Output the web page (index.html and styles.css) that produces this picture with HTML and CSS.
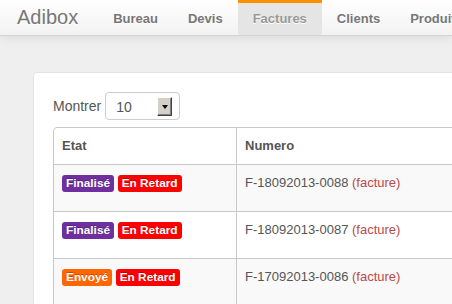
FILE: index.html
```html
<!DOCTYPE html>
<html lang="fr">
<head>
<meta charset="utf-8">
<title>Adibox - Factures</title>
<link rel="stylesheet" href="styles.css">
</head>
<body>
<header class="navbar">
  <a class="brand" href="#">Adibox</a>
  <nav class="nav">
    <a class="nav-link" href="#">Bureau</a>
    <a class="nav-link" href="#">Devis</a>
    <a class="nav-link active" href="#">Factures</a>
    <a class="nav-link" href="#">Clients</a>
    <a class="nav-link" href="#">Produits</a>
  </nav>
</header>
<main class="page">
  <section class="card">
    <div class="length">
      <span class="length-label">Montrer</span>
      <span class="select"><span class="select-value">10</span><span class="select-btn"><span class="arrow"></span></span></span>
    </div>
    <table class="grid">
      <thead>
        <tr><th class="col-etat">Etat</th><th>Numero</th></tr>
      </thead>
      <tbody>
        <tr class="odd">
          <td><span class="label purple">Finalisé</span> <span class="label red">En Retard</span></td>
          <td>F-18092013-0088 <a class="doc" href="#">(facture)</a></td>
        </tr>
        <tr>
          <td><span class="label purple">Finalisé</span> <span class="label red">En Retard</span></td>
          <td>F-18092013-0087 <a class="doc" href="#">(facture)</a></td>
        </tr>
        <tr class="odd">
          <td><span class="label orange">Envoyé</span> <span class="label red">En Retard</span></td>
          <td>F-17092013-0086 <a class="doc" href="#">(facture)</a></td>
        </tr>
      </tbody>
    </table>
  </section>
</main>
</body>
</html>
```
FILE: styles.css
```css
html, body {
  margin: 0;
  padding: 0;
}
body {
  background: #efefef;
  font-family: "Liberation Sans", Arial, sans-serif;
  font-size: 13px;
  color: #555;
  overflow: hidden;
  width: 452px;
  height: 304px;
}
.navbar {
  display: flex;
  align-items: flex-start;
  height: 35px;
  background: linear-gradient(to bottom, #ffffff, #f2f2f2);
  border-bottom: 1px solid #d4d4d4;
  box-shadow: 0 1px 10px rgba(0, 0, 0, 0.1);
  white-space: nowrap;
  position: relative;
}
.brand {
  display: block;
  padding: 7px 20px 0 17px;
  font-size: 20px;
  line-height: 20px;
  color: #777;
  text-decoration: none;
  text-shadow: 0 1px 0 #fff;
}
.nav {
  display: flex;
}
.nav-link {
  display: block;
  border-top: 3px solid transparent;
  padding: 6px 15px 6px;
  line-height: 20px;
  font-size: 13px;
  font-weight: bold;
  color: #777;
  text-decoration: none;
  text-shadow: 0 1px 0 #fff;
}
.nav-link.active {
  border-top-color: #ff9000;
  background: #e5e5e5;
  color: #999;
}
.page {
  padding: 36px 0 0 33px;
}
.card {
  background: #fff;
  border: 1px solid #e2e2e2;
  border-radius: 4px;
  padding: 19px 0 0 19px;
  width: 600px;
  height: 400px;
}
.length {
  display: flex;
  align-items: center;
  gap: 4px;
  height: 28px;
}
.length-label {
  font-size: 14px;
  color: #555;
}
.select {
  display: flex;
  align-items: center;
  justify-content: space-between;
  box-sizing: border-box;
  width: 75px;
  height: 28px;
  border: 1px solid #ccc;
  border-radius: 4px;
  padding: 0 7px 0 10px;
  background: #fff;
}
.select-value {
  font-size: 14px;
  color: #555;
  padding-top: 2px;
}
.select-btn {
  box-sizing: border-box;
  width: 15px;
  height: 19px;
  background: #d4d0c8;
  border: 1px solid;
  border-color: #fff #404040 #404040 #fff;
  box-shadow: inset -1px -1px 0 #808080;
  display: flex;
  align-items: center;
  justify-content: center;
}
.arrow {
  width: 0;
  height: 0;
  border-left: 3.5px solid transparent;
  border-right: 3.5px solid transparent;
  border-top: 4px solid #000;
  margin-top: 1px;
}
.grid {
  margin-top: 7px;
  width: 560px;
  border-collapse: separate;
  border-spacing: 0;
  border: 1px solid #c8c8c8;
  border-left-width: 1px;
  border-radius: 4px 0 0 0;
}
.grid th,
.grid td {
  text-align: left;
  vertical-align: top;
  padding: 8px 9px 8px 8px;
  line-height: 20px;
}
.grid th {
  font-weight: bold;
  color: #555;
  border-bottom: 1px solid #c8c8c8;
}
.grid td {
  padding-bottom: 18px;
  border-bottom: 1px solid #c8c8c8;
}
.grid th + th,
.grid td + td {
  border-left: 1px solid #c8c8c8;
}
.col-etat {
  width: 165px;
}
.grid tr.odd td {
  background: #f9f9f9;
}
.label {
  display: inline-block;
  padding: 1px 4px 2px;
  font-size: 11.844px;
  font-weight: bold;
  line-height: 14px;
  color: #fff;
  text-shadow: 0 -1px 0 rgba(0, 0, 0, 0.25);
  border-radius: 3px;
  vertical-align: baseline;
}
.purple { background: #6f2f9f; }
.red { background: #ff0000; }
.orange { background: #ff6600; }
.doc {
  color: #b94a48;
  text-decoration: none;
}
```
